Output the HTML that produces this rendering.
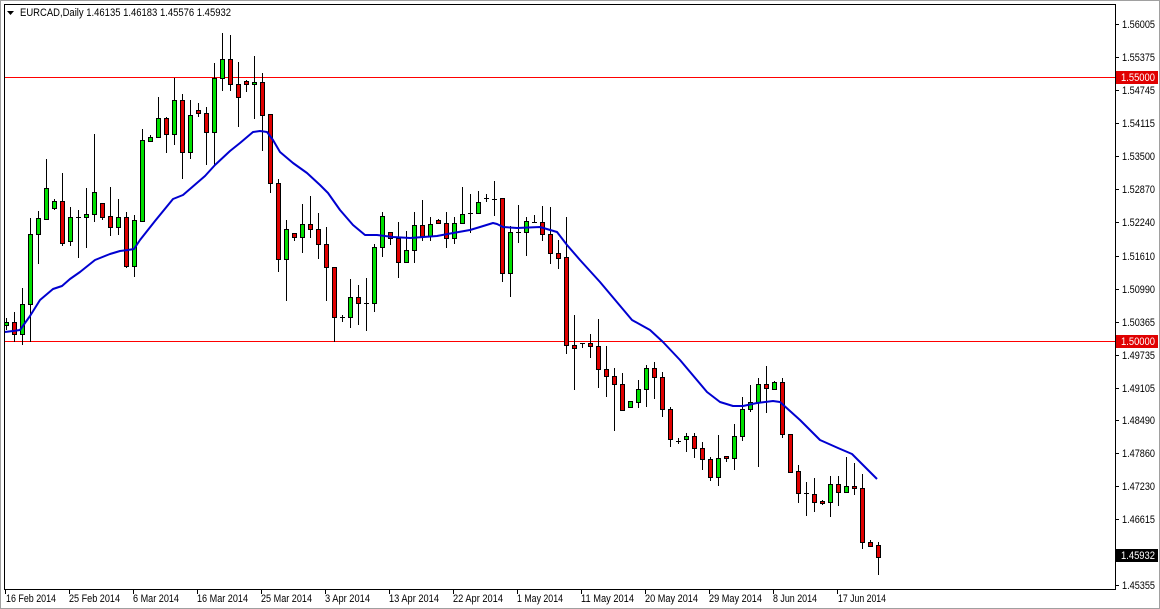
<!DOCTYPE html>
<html><head><meta charset="utf-8"><style>
html,body{margin:0;padding:0;background:#fff;}
body{width:1160px;height:609px;overflow:hidden;position:relative;font-family:"Liberation Sans",sans-serif;}
svg{position:absolute;left:0;top:0;}
text{font-family:"Liberation Sans",sans-serif;font-size:11px;fill:#000;}
</style></head><body>
<svg id="s" width="1160" height="609" xmlns="http://www.w3.org/2000/svg">
<rect x="0" y="0" width="1160" height="609" fill="#fff"/>
<rect x="0.5" y="0.5" width="1159" height="608" fill="none" stroke="#a0a0a0"/>
<rect x="4.5" y="4.5" width="1111" height="585" fill="none" stroke="#000" shape-rendering="crispEdges"/>
<rect x="5" y="77" width="1110" height="1" fill="#ff0000" shape-rendering="crispEdges"/>
<rect x="5" y="341" width="1110" height="1" fill="#ff0000" shape-rendering="crispEdges"/>
<g id="cd" shape-rendering="crispEdges"></g>
<polyline id="ma" fill="none" stroke="#0000d0" stroke-width="2" stroke-linejoin="round" points="5,332 13,331 20,330 30,316 40,300 53,289 62,286 70,279 80,272 95,260 110,254 120,251 128,250 134,249 140,240 155,221 173,199 183,195 205,176 215,165 230,151 240,143 253,132 260,131 267,132 273,140 280,152 293,163 307,173 320,185 328,193 340,210 353,225 365,235 377,235 393,237 410,238 437,236 453,233 470,230 480,227 493,223 497,224 503,227 517,228 540,227 557,232 567,245 580,260 600,282 632,320 650,330 663,342 680,360 707,392 720,402 733,406 743,406 757,403 773,401 780,402 800,420 820,440 838,448 852,454 860,462 877,479"/>
<g id="ax" shape-rendering="crispEdges"></g>
<polygon points="7,11 14,11 10.5,15" fill="#000"/>
<text x="20" y="16" textLength="211" lengthAdjust="spacingAndGlyphs">EURCAD,Daily  1.46135 1.46183 1.45576 1.45932</text>
<rect x="1116" y="71" width="42" height="13" fill="#e00000"/>
<text x="1121" y="81" style="fill:#fff" textLength="34" lengthAdjust="spacingAndGlyphs">1.55000</text>
<rect x="1116" y="335" width="42" height="13" fill="#e00000"/>
<text x="1121" y="345" style="fill:#fff" textLength="34" lengthAdjust="spacingAndGlyphs">1.50000</text>
<rect x="1116" y="549" width="42" height="13" fill="#000"/>
<text x="1121" y="559" style="fill:#fff" textLength="34" lengthAdjust="spacingAndGlyphs">1.45932</text>
<g id="pl">
<text x="1122" y="28">1.56005</text>
<text x="1122" y="61">1.55375</text>
<text x="1122" y="94">1.54745</text>
<text x="1122" y="127">1.54115</text>
<text x="1122" y="160">1.53500</text>
<text x="1122" y="193">1.52870</text>
<text x="1122" y="226">1.52240</text>
<text x="1122" y="260">1.51610</text>
<text x="1122" y="293">1.50990</text>
<text x="1122" y="326">1.50365</text>
<text x="1122" y="359">1.49735</text>
<text x="1122" y="392">1.49105</text>
<text x="1122" y="424">1.48490</text>
<text x="1122" y="457">1.47860</text>
<text x="1122" y="490">1.47230</text>
<text x="1122" y="523">1.46615</text>
<text x="1122" y="589">1.45355</text>
</g>
<text x="6" y="602" textLength="50" lengthAdjust="spacingAndGlyphs">16 Feb 2014</text>
<text x="69" y="602" textLength="51" lengthAdjust="spacingAndGlyphs">25 Feb 2014</text>
<text x="133" y="602" textLength="46" lengthAdjust="spacingAndGlyphs">6 Mar 2014</text>
<text x="197" y="602" textLength="51" lengthAdjust="spacingAndGlyphs">16 Mar 2014</text>
<text x="261" y="602" textLength="51" lengthAdjust="spacingAndGlyphs">25 Mar 2014</text>
<text x="325" y="602" textLength="45" lengthAdjust="spacingAndGlyphs">3 Apr 2014</text>
<text x="389" y="602" textLength="50" lengthAdjust="spacingAndGlyphs">13 Apr 2014</text>
<text x="453" y="602" textLength="50" lengthAdjust="spacingAndGlyphs">22 Apr 2014</text>
<text x="517" y="602" textLength="46" lengthAdjust="spacingAndGlyphs">1 May 2014</text>
<text x="581" y="602" textLength="53" lengthAdjust="spacingAndGlyphs">11 May 2014</text>
<text x="645" y="602" textLength="53" lengthAdjust="spacingAndGlyphs">20 May 2014</text>
<text x="709" y="602" textLength="53" lengthAdjust="spacingAndGlyphs">29 May 2014</text>
<text x="773" y="602" textLength="44" lengthAdjust="spacingAndGlyphs">8 Jun 2014</text>
<text x="838" y="602" textLength="48" lengthAdjust="spacingAndGlyphs">17 Jun 2014</text>
</svg>
<script>
var D=[[0,322,325,318,330,'g'],[1,322,334,312,342,'r'],[2,304,334,288,345,'g'],[3,234,304,218,342,'g'],[4,218,234,211,264,'g'],[5,188,219,159,220,'g'],[6,201,208,199,210,'g'],[7,201,243,173,246,'r'],[8,217,241,207,246,'g'],[9,217,217,210,258,'d'],[10,214,217,188,248,'g'],[11,192,214,134,222,'g'],[12,203,217,203,220,'r'],[13,216,227,187,236,'r'],[14,217,227,199,235,'g'],[15,217,266,212,268,'r'],[16,220,266,215,277,'g'],[17,140,221,129,222,'g'],[18,137,141,135,142,'g'],[19,118,137,97,138,'g'],[20,118,134,117,153,'r'],[21,100,134,78,145,'g'],[22,100,152,94,179,'r'],[23,115,152,100,159,'g'],[24,110,113,103,117,'r'],[25,113,132,107,165,'r'],[26,78,132,63,165,'g'],[27,59,78,33,91,'g'],[28,59,84,35,91,'r'],[29,84,97,62,127,'r'],[30,81,84,80,92,'r'],[31,82,84,56,119,'g'],[32,82,115,73,151,'r'],[33,114,183,114,193,'r'],[34,183,259,179,272,'r'],[35,229,259,220,301,'g'],[36,233,237,233,241,'r'],[37,224,237,204,253,'g'],[38,224,229,196,238,'r'],[39,229,244,213,259,'r'],[40,244,267,227,301,'r'],[41,267,317,267,342,'r'],[42,317,317,315,322,'d'],[43,297,317,279,328,'g'],[44,297,303,285,325,'r'],[45,303,303,278,331,'d'],[46,247,303,244,312,'g'],[47,216,247,212,257,'g'],[48,232,238,232,245,'r'],[49,238,262,222,278,'r'],[50,250,262,231,263,'g'],[51,225,250,212,263,'g'],[52,225,236,200,241,'r'],[53,224,236,217,241,'g'],[54,220,223,219,224,'r'],[55,223,238,212,248,'r'],[56,223,238,217,244,'g'],[57,214,223,187,224,'g'],[58,213,213,194,233,'d'],[59,202,213,191,214,'g'],[60,198,198,194,202,'d'],[61,199,199,181,216,'d'],[62,198,273,198,282,'r'],[63,232,273,226,297,'g'],[64,232,232,205,243,'d'],[65,221,232,217,256,'g'],[66,222,222,215,223,'d'],[67,222,234,206,241,'r'],[68,234,253,207,264,'r'],[69,253,258,240,269,'r'],[70,257,345,217,354,'r'],[71,345,348,315,390,'r'],[72,343,343,343,348,'d'],[73,343,346,334,358,'r'],[74,346,369,319,388,'r'],[75,369,376,346,397,'r'],[76,376,384,368,431,'r'],[77,384,410,373,411,'r'],[78,401,407,401,408,'g'],[79,389,402,380,408,'g'],[80,368,389,365,407,'g'],[81,368,377,362,399,'r'],[82,377,409,372,417,'r'],[83,409,439,407,447,'r'],[84,441,441,438,444,'d'],[85,436,439,433,452,'g'],[86,436,448,433,458,'r'],[87,448,459,442,470,'r'],[88,459,477,457,481,'r'],[89,458,477,435,486,'g'],[90,456,458,456,462,'r'],[91,436,458,424,470,'g'],[92,409,436,397,441,'g'],[93,402,409,385,412,'g'],[94,384,402,378,467,'g'],[95,384,388,366,413,'r'],[96,382,389,381,390,'g'],[97,382,434,378,438,'r'],[98,434,472,434,473,'r'],[99,471,493,465,503,'r'],[100,493,493,482,516,'d'],[101,494,502,478,512,'r'],[102,501,503,500,505,'r'],[103,484,502,476,517,'g'],[104,484,492,476,506,'r'],[105,486,492,457,493,'g'],[106,486,488,463,495,'r'],[107,488,542,474,549,'r'],[108,542,546,540,547,'r'],[109,545,557,542,575,'r']];
var g=document.getElementById('cd'),h='';
D.forEach(function(c){var x=6+8*c[0];
h+='<line x1="'+(x+0.5)+'" y1="'+c[3]+'" x2="'+(x+0.5)+'" y2="'+c[4]+'" stroke="#000"/>';
if(c[5]=='d'){h+='<line x1="'+(x-2)+'" y1="'+(c[1]+0.5)+'" x2="'+(x+3)+'" y2="'+(c[1]+0.5)+'" stroke="#000"/>';}
else{var f=c[5]=='g'?'#00e000':'#e00000';var hh=Math.max(c[2]-c[1],2);
h+='<rect x="'+(x-2+0.5)+'" y="'+(c[1]+0.5)+'" width="4" height="'+hh+'" fill="'+f+'" stroke="#000"/>';}
});
g.innerHTML=h;
var a='',ys=[24,57,90,123,156,189,222,256,289,322,355,388,420,453,486,519,585];
ys.forEach(function(y){a+='<line x1="1116" y1="'+(y+0.5)+'" x2="1119" y2="'+(y+0.5)+'" stroke="#000"/>';});
for(var i=0;i<14;i++){var x=5+64*i;a+='<line x1="'+(x+0.5)+'" y1="590" x2="'+(x+0.5)+'" y2="594" stroke="#000"/>';}
document.getElementById('ax').innerHTML=a;
var t=document.querySelectorAll('#pl text');for(var k=0;k<t.length;k++){t[k].setAttribute('textLength','33');t[k].setAttribute('lengthAdjust','spacingAndGlyphs');}
</script>
</body></html>
